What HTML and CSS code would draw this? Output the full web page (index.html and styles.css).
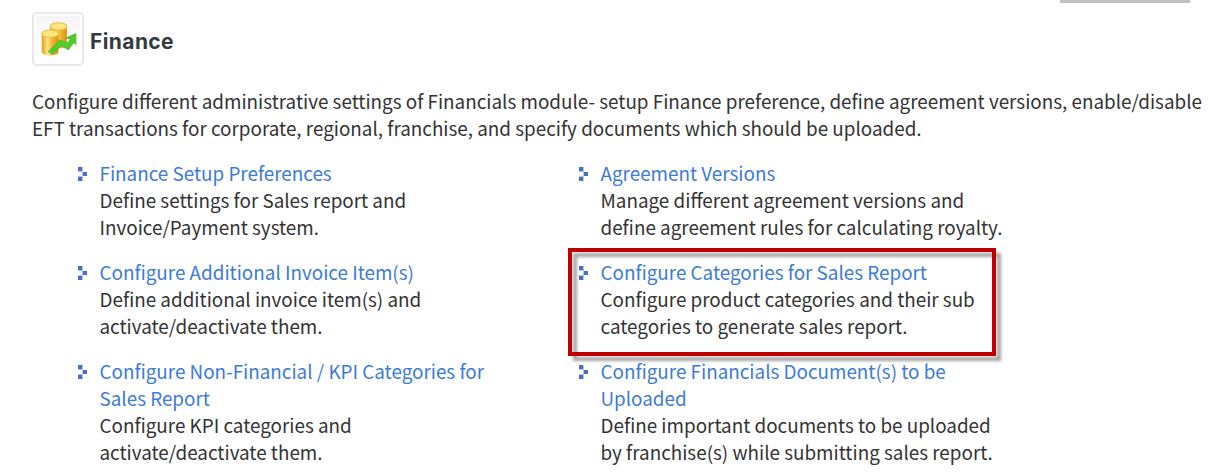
FILE: index.html
```html
<!DOCTYPE html>
<html lang="en">
<head>
<meta charset="utf-8">
<title>Finance</title>
<link rel="stylesheet" href="styles.css">
</head>
<body>
  <div class="topBar"></div>

  <div class="header">
    <div class="iconBox">
      <svg width="42" height="44" viewBox="0 0 40 42">
        <defs>
          <linearGradient id="gold" x1="0" x2="1" y1="0" y2="0">
            <stop offset="0" stop-color="#e79a12"/>
            <stop offset="0.35" stop-color="#ffe48a"/>
            <stop offset="0.6" stop-color="#f3b92c"/>
            <stop offset="1" stop-color="#dc9213"/>
          </linearGradient>
        </defs>
        <path d="M12.500 9v18c0 4 16 4 16 0V9z" fill="url(#gold)"/>
        <ellipse cx="20.500" cy="9" rx="8" ry="3.500" fill="#ffe680" stroke="#e9bd50"/>
        <path d="M4.500 16v17c0 5 16 5 16 0V16z" fill="url(#gold)"/>
        <ellipse cx="12.500" cy="16" rx="8" ry="3.500" fill="#ffe680" stroke="#e9bd50"/>
        <path d="M11 33l11-11 7 3 3-4-4-1 9-4v10l-2-2-5 7-7-4-8 8z" fill="#4fcf26" stroke="#55b83a"/>
      </svg>
    </div>
    <h1 class="title">Finance</h1>
  </div>

  <p class="intro">Configure different administrative settings of Financials module- setup Finance preference, define agreement versions, enable/disable<br>EFT transactions for corporate, regional, franchise, and specify documents which should be uploaded.</p>

  <div class="links">
    <div class="item">
      <a class="link">Finance Setup Preferences</a>
      <div>Define settings for Sales report and<br>Invoice/Payment system.</div>
    </div>
    <div class="item">
      <a class="link">Agreement Versions</a>
      <div>Manage different agreement versions and<br>define agreement rules for calculating royalty.</div>
    </div>
    <div class="item">
      <a class="link">Configure Additional Invoice Item(s)</a>
      <div>Define additional invoice item(s) and<br>activate/deactivate them.</div>
    </div>
    <div class="item">
      <a class="link">Configure Categories for Sales Report</a>
      <div>Configure product categories and their sub<br>categories to generate sales report.</div>
      <div class="marker"></div>
    </div>
    <div class="item">
      <a class="link">Configure Non-Financial / KPI Categories for<br>Sales Report</a>
      <div>Configure KPI categories and<br>activate/deactivate them.</div>
    </div>
    <div class="item">
      <a class="link">Configure Financials Document(s) to be<br>Uploaded</a>
      <div>Define important documents to be uploaded<br>by franchise(s) while submitting sales report.</div>
    </div>
  </div>
</body>
</html>
```

FILE: styles.css
```css
html, body { margin: 0; padding: 0; }

body
{
    background: white;
    overflow: hidden;
    color: #333;
    font: 18.850px/27px "Noto Sans CJK SC", "Open Sans", sans-serif;
    white-space: nowrap;
}

.topBar
{
    width: 130px;
    height: 3px;
    margin-left: 1060px;
    background: #c0c0c0;
}

.header
{
    display: flex;
    align-items: center;
    margin: 9px 0 0 32px;
}

.iconBox
{
    box-sizing: border-box;
    display: flex;
    align-items: center;
    justify-content: center;
    width: 52px;
    height: 54px;
    border: 2px solid #e8e8e8;
    border-radius: 5px;
    background: linear-gradient(#f4f4f4, #fff 70%);
    box-shadow: inset 0 0 0 2px #fff;
}

.title
{
    margin: 5px 0 0 6px;
    font: bold 21px/27px Inter, sans-serif;
    letter-spacing: 0.4px;
    color: #333b40;
}

.intro
{
    margin: 21px 0 0 32px;
}

.links
{
    display: grid;
    grid-template-columns: 501px 501px;
    row-gap: 18px;
    margin: 18px 0 0 78px;
}

.item
{
    position: relative;
    padding-left: 21.500px;
}

/* pixel arrow bullet */
.item::before
{
    content: "";
    position: absolute;
    left: 0;
    top: 8px;
    width: 9px;
    height: 14px;
    background:
        linear-gradient(#4a6fc0, #4a6fc0) 0 0 / 4px 4px no-repeat,
        linear-gradient(#4a6fc0, #4a6fc0) 5px 5px / 4px 4px no-repeat,
        linear-gradient(#4a6fc0, #4a6fc0) 0 10px / 4px 4px no-repeat,
        linear-gradient(#b5c4e6, #b5c4e6) 4px 0 / 1px 14px no-repeat,
        linear-gradient(#b5c4e6, #b5c4e6) 0 4px / 5px 1px no-repeat,
        linear-gradient(#b5c4e6, #b5c4e6) 0 9px / 5px 1px no-repeat;
}

.link
{
    color: #3d7bd9;
}

/* red frame around the highlighted entry */
.marker
{
    position: absolute;
    left: -11px;
    top: -10px;
    box-sizing: border-box;
    width: 428px;
    height: 108px;
    border: 4px solid #c00000;
    filter: drop-shadow(5px 5px 1.500px rgba(0, 0, 0, 0.35));
}
```
